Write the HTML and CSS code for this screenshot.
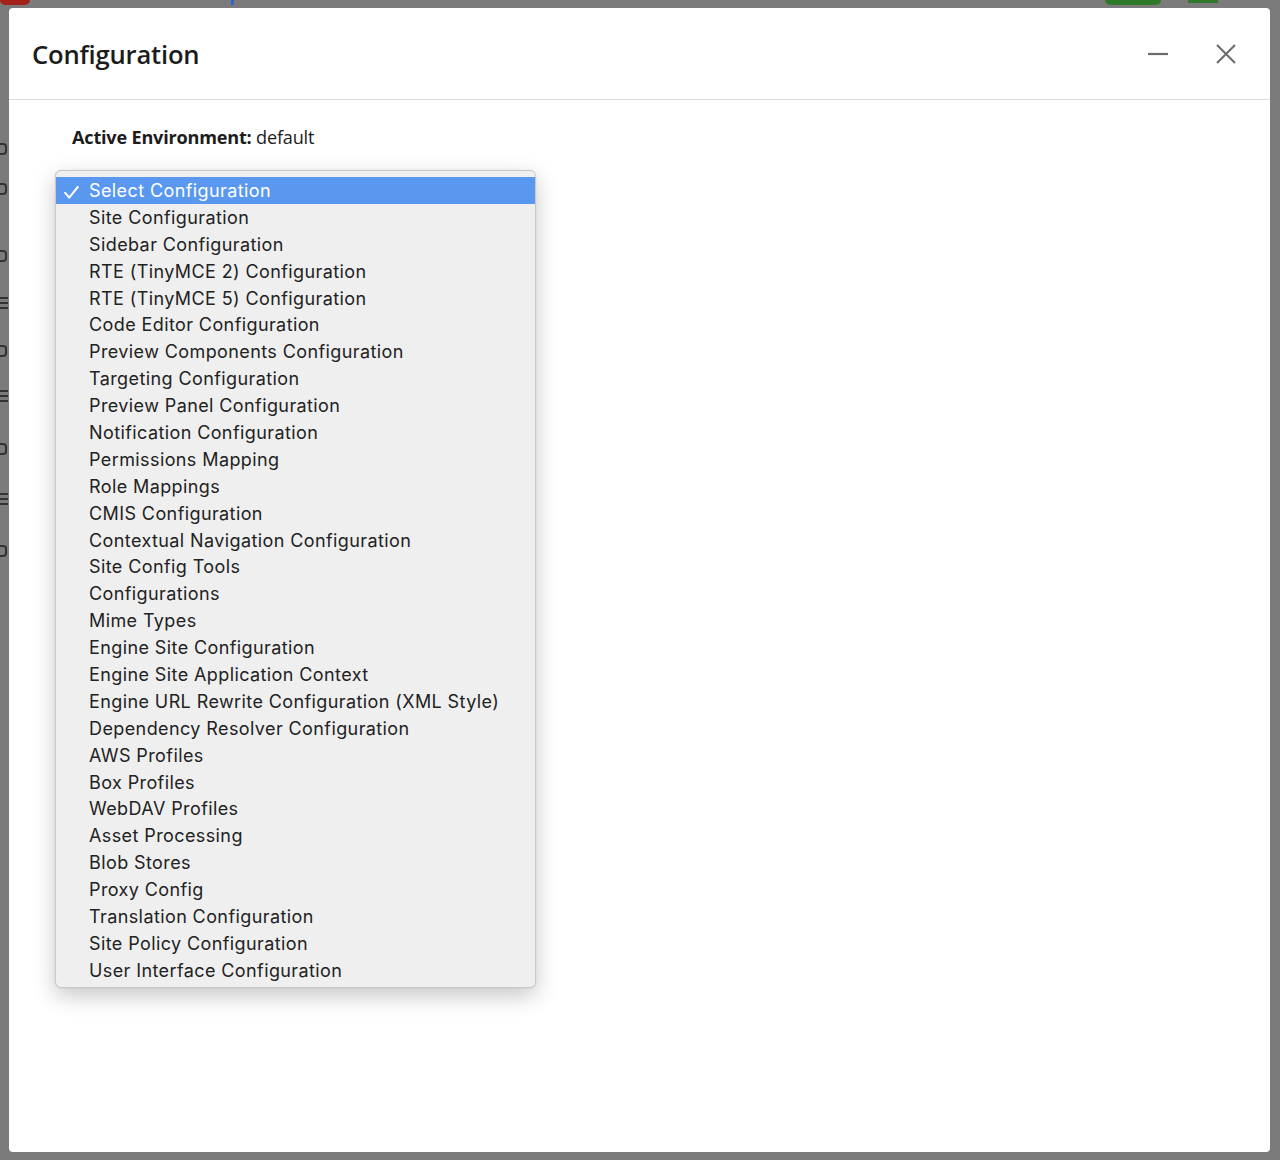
FILE: index.html
```html
<!DOCTYPE html>
<html>
<head>
<meta charset="utf-8">
<link rel="stylesheet" href="styles.css">
</head>
<body>
<div class="backdrop">
  <div class="app-top">
    <span class="logo-blob"></span>
    <span class="top-dot"></span>
    <span class="top-toggle"></span>
    <span class="top-green"></span>
  </div>
  <div class="app-side">
    <span class="side-ico s1"></span>
    <span class="side-ico s2"></span>
    <span class="side-ico s3"></span>
    <span class="side-lines l1"></span>
    <span class="side-ico s4"></span>
    <span class="side-lines l2"></span>
    <span class="side-ico s5"></span>
    <span class="side-lines l3"></span>
    <span class="side-ico s6"></span>
  </div>
  <div class="dialog">
    <header class="dlg-head">
      <h1 class="dlg-title">Configuration</h1>
      <div class="dlg-actions">
        <button class="icon-btn" aria-label="Minimize">
          <svg width="24" height="24" viewBox="0 0 24 24"><path d="M2 12h20" stroke="#6b6b6b" stroke-width="2.2" fill="none"/></svg>
        </button>
        <button class="icon-btn" aria-label="Close">
          <svg width="24" height="24" viewBox="0 0 24 24"><path d="M3 3L21 21M21 3L3 21" stroke="#6b6b6b" stroke-width="2" fill="none"/></svg>
        </button>
      </div>
    </header>
    <div class="dlg-body">
      <p class="env"><strong>Active Environment:</strong> default</p>
      <ul class="menu">
        <li class="sel"><svg class="check" width="15" height="13" viewBox="0 0 15 13"><path d="M1.2 6.8L5.2 11.6L13.8 1" stroke="#fff" stroke-width="2" fill="none" stroke-linecap="round" stroke-linejoin="round"/></svg>Select Configuration</li>
        <li>Site Configuration</li>
        <li>Sidebar Configuration</li>
        <li>RTE (TinyMCE 2) Configuration</li>
        <li>RTE (TinyMCE 5) Configuration</li>
        <li>Code Editor Configuration</li>
        <li>Preview Components Configuration</li>
        <li>Targeting Configuration</li>
        <li>Preview Panel Configuration</li>
        <li>Notification Configuration</li>
        <li>Permissions Mapping</li>
        <li>Role Mappings</li>
        <li>CMIS Configuration</li>
        <li>Contextual Navigation Configuration</li>
        <li>Site Config Tools</li>
        <li>Configurations</li>
        <li>Mime Types</li>
        <li>Engine Site Configuration</li>
        <li>Engine Site Application Context</li>
        <li>Engine URL Rewrite Configuration (XML Style)</li>
        <li>Dependency Resolver Configuration</li>
        <li>AWS Profiles</li>
        <li>Box Profiles</li>
        <li>WebDAV Profiles</li>
        <li>Asset Processing</li>
        <li>Blob Stores</li>
        <li>Proxy Config</li>
        <li>Translation Configuration</li>
        <li>Site Policy Configuration</li>
        <li>User Interface Configuration</li>
      </ul>
    </div>
  </div>
</div>
</body>
</html>
```

FILE: styles.css
```css
* { box-sizing: border-box; }
html, body { margin: 0; padding: 0; }
body {
  width: 1280px;
  height: 1160px;
  overflow: hidden;
  background: #7a7a7a;
  font-family: "Open Sans", "Noto Sans", sans-serif;
}
.backdrop {
  position: relative;
  width: 1280px;
  height: 1160px;
  padding: 8px 10px 8px 9px;
  background: #7b7b7b;
}
.app-top span, .app-side span { position: absolute; }
.logo-blob { left: 0; top: 0; width: 30px; height: 5px; background: #a3231c; border-radius: 0 0 10px 10px; }
.top-dot { left: 231px; top: 0; width: 3px; height: 5px; background: #2d64c8; }
.top-toggle { left: 1105px; top: 0; width: 56px; height: 5px; border-radius: 0 0 20px 20px; background: #2f7a2a; }
.top-green { left: 1188px; top: 0; width: 30px; height: 3px; background: #2f7a2a; }
.side-ico { left: 0; width: 7px; height: 12px; border: 2px solid #333; border-left: none; border-radius: 0 4px 4px 0; }
.side-lines { left: 0; width: 8px; height: 12px; border-top: 2px solid #333; border-bottom: 2px solid #333; }
.side-lines::after { content: ""; position: absolute; left: 0; right: 0; top: 3px; height: 2px; background: #333; }
.s1 { top: 143px; }
.s2 { top: 183px; }
.s3 { top: 250px; }
.l1 { top: 297px; }
.s4 { top: 345px; }
.l2 { top: 390px; }
.s5 { top: 443px; }
.l3 { top: 493px; }
.s6 { top: 545px; }

.dialog {
  position: relative;
  width: 1261px;
  height: 1144px;
  background: #fff;
  border-radius: 4px;
  display: flex;
  flex-direction: column;
}
.dlg-head {
  height: 92px;
  border-bottom: 1px solid #dcdcdc;
  display: flex;
  align-items: center;
  justify-content: space-between;
  padding: 0 32px 0 23px;
}
.dlg-title {
  margin: 0;
  font-family: "Open Sans", sans-serif;
  font-weight: 600;
  font-size: 25.6px;
  color: #1c1c1c;
  letter-spacing: -0.2px;
  padding-top: 1px;
}
.dlg-actions { display: flex; gap: 44px; align-items: center; }
.icon-btn {
  border: 0; background: none; padding: 0; width: 24px; height: 24px;
  display: flex; align-items: center; justify-content: center;
}
.dlg-body { padding: 25px 46px 0 46px; }
.env {
  margin: 0 0 21px 17px;
  font-family: "Open Sans", sans-serif;
  font-size: 18.1px;
  line-height: 24px;
  color: #1c1c1c;
  letter-spacing: -0.2px;
}
.env strong { font-weight: 700; }
.menu {
  list-style: none;
  margin: 0;
  padding: 6px 0 3px 0;
  width: 481px;
  background: #efefef;
  border: 1px solid #c9c9c9;
  border-radius: 6px;
  box-shadow: 0 8px 22px rgba(0,0,0,0.22), 0 0 2px rgba(0,0,0,0.1);
  font-family: "Inter", sans-serif;
  font-size: 18px;
  letter-spacing: 0.4px;
  color: #222;
}
.menu li {
  height: 26.9px;
  line-height: 26.9px;
  padding: 1px 0 0 33px;
  position: relative;
  white-space: nowrap;
  overflow: hidden;
}
.menu li.sel {
  background: #5a98f0;
  color: #fff;
}
.check {
  position: absolute;
  left: 8px;
  top: 9px;
}
```
